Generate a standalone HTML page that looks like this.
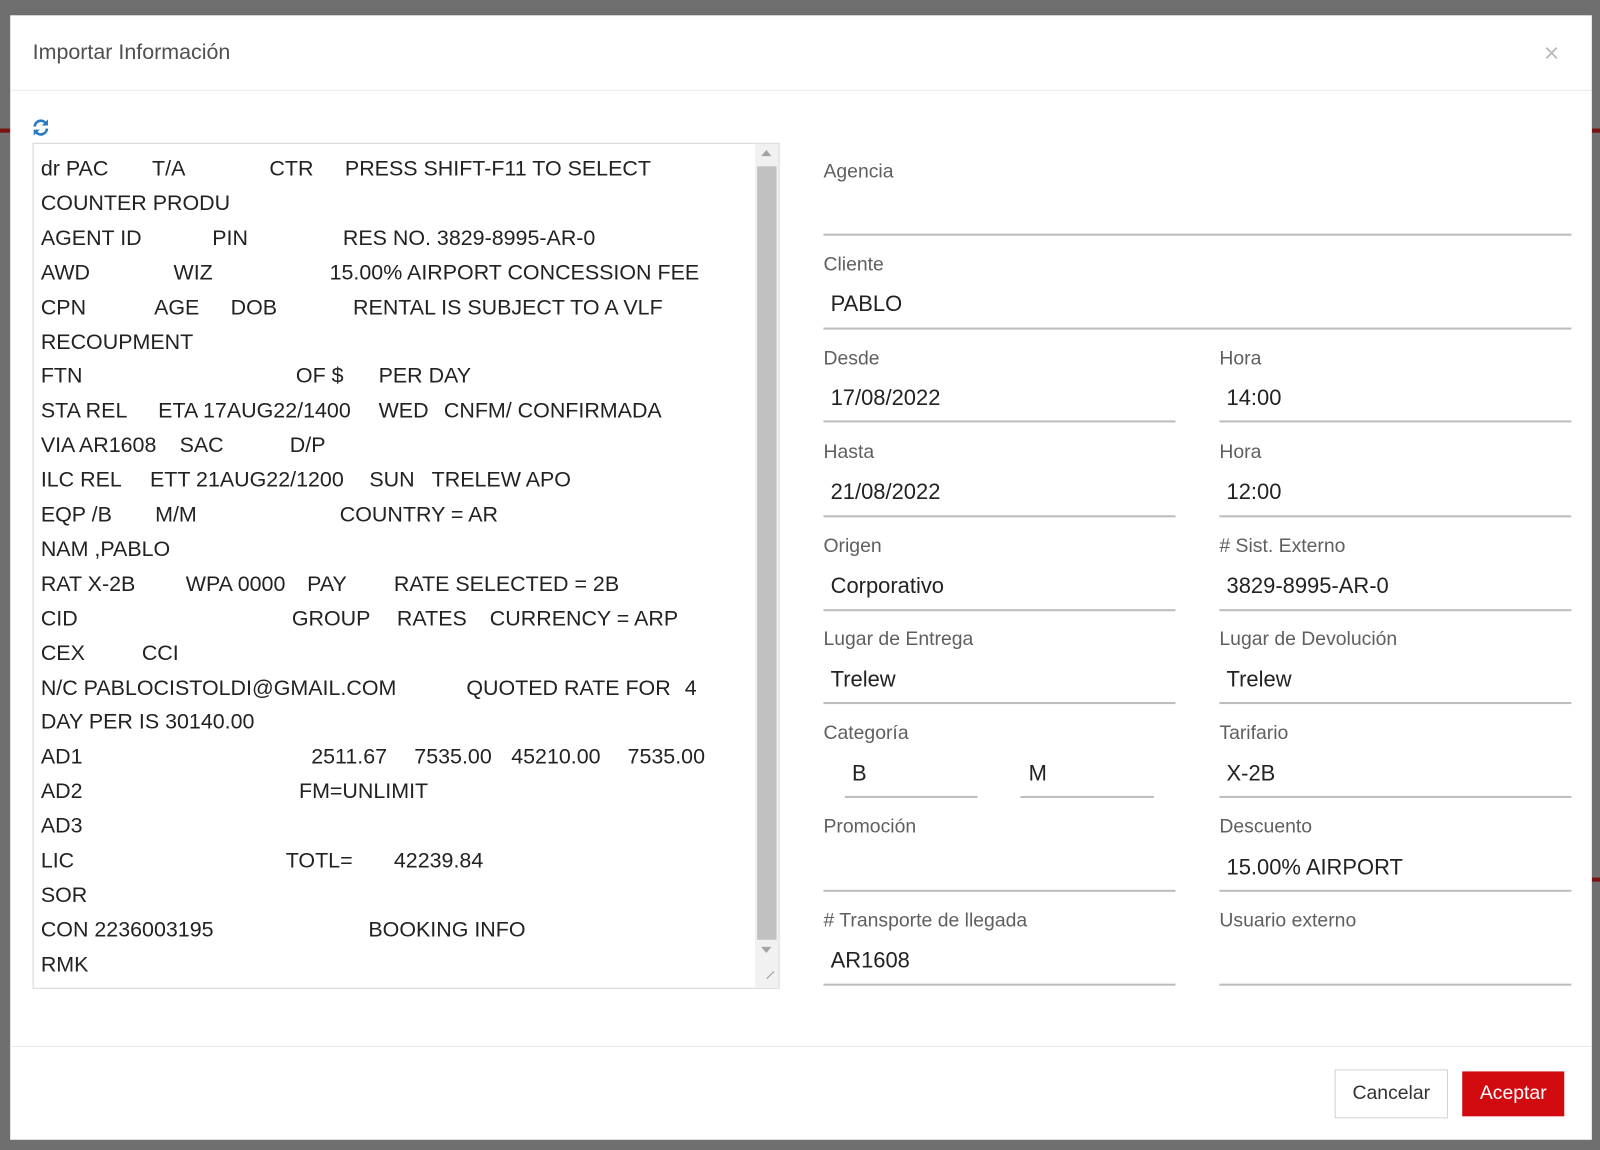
<!DOCTYPE html>
<html><head><meta charset="utf-8"><style>
html,body{margin:0;padding:0;width:1600px;height:1150px;overflow:hidden;background:#6f6f6f;font-family:"Liberation Sans",sans-serif}
#w{position:absolute;left:0;top:0;width:1568px;height:1127px;transform:scale(1.0204);transform-origin:0 0}
.a{position:absolute;white-space:nowrap}
#modal{position:absolute;left:10px;top:15px;width:1550px;height:1102px;background:#fff}
.ln{position:absolute;height:34px;line-height:34px;font-size:21px;color:#222}
.ln span{position:absolute;top:0;white-space:nowrap}
.lab{position:absolute;font-size:19px;color:#5f5f5f;white-space:nowrap;margin-top:1px}
.val{position:absolute;font-size:21.5px;color:#222;white-space:nowrap}
.ul{position:absolute;height:2px;background:#bdbdbd}
</style></head><body><div id="w">
<div class="a" style="left:0;top:126px;width:10px;height:4px;background:#7a1010"></div>
<div class="a" style="left:1560px;top:126px;width:8px;height:4px;background:#7a1010"></div>
<div class="a" style="left:1560px;top:860px;width:8px;height:4px;background:#7a1010"></div>
<div id="modal"></div>
<div class="a" style="left:32px;top:40px;font-size:21px;color:#505050">Importar Información</div>
<div class="a" style="left:1513px;top:37px;font-size:26px;color:#bbb">×</div>
<div class="a" style="left:10px;top:88px;width:1550px;height:1px;background:#e8e8e8"></div>
<svg class="a" style="left:31px;top:116px" width="18" height="18" viewBox="0 0 18 18"><path d="M3 8 A6 6 0 0 1 14 5" fill="none" stroke="#2a7ac0" stroke-width="2.6"/><path d="M16 1 L16 7 L10 7 Z" fill="#2a7ac0"/><path d="M15 10 A6 6 0 0 1 4 13" fill="none" stroke="#2a7ac0" stroke-width="2.6"/><path d="M2 17 L2 11 L8 11 Z" fill="#2a7ac0"/></svg>
<div class="a" style="left:32px;top:140px;width:730px;height:827px;border:1px solid #d6d6d6"></div>
<div class="a" style="left:740px;top:141px;width:23px;height:827px;background:#f1f1f1"></div>
<div class="a" style="left:742px;top:163px;width:19px;height:758px;background:#c1c1c1"></div>
<div class="a" style="left:746px;top:147px;width:0;height:0;border-left:5px solid transparent;border-right:5px solid transparent;border-bottom:6px solid #a3a3a3"></div>
<div class="a" style="left:746px;top:928px;width:0;height:0;border-left:5px solid transparent;border-right:5px solid transparent;border-top:6px solid #a3a3a3"></div>
<div class="a" style="left:750px;top:955px;width:10px;height:1px;background:#999;transform:rotate(-45deg)"></div>

<div id="ta"></div>
<script>
var L=[[["dr PAC",40],["T/A",149],["CTR",264],["PRESS SHIFT-F11 TO SELECT",338]],[["COUNTER PRODU",40]],[["AGENT ID",40],["PIN",208],["RES NO. 3829-8995-AR-0",336]],[["AWD",40],["WIZ",170],["15.00% AIRPORT CONCESSION FEE",323]],[["CPN",40],["AGE",151],["DOB",226],["RENTAL IS SUBJECT TO A VLF",346]],[["RECOUPMENT",40]],[["FTN",40],["OF $",290],["PER DAY",371]],[["STA REL",40],["ETA 17AUG22/1400",155],["WED",371],["CNFM/ CONFIRMADA",435]],[["VIA AR1608",40],["SAC",176],["D/P",284]],[["ILC REL",40],["ETT 21AUG22/1200",147],["SUN",362],["TRELEW APO",423]],[["EQP /B",40],["M/M",152],["COUNTRY = AR",333]],[["NAM ,PABLO",40]],[["RAT X-2B",40],["WPA 0000",182],["PAY",301],["RATE SELECTED = 2B",386]],[["CID",40],["GROUP",286],["RATES",389],["CURRENCY = ARP",480]],[["CEX",40],["CCI",139]],[["N/C PABLOCISTOLDI@GMAIL.COM",40],["QUOTED RATE FOR",457],["4",671]],[["DAY PER IS  30140.00",40]],[["AD1",40],["2511.67",305],["7535.00",406],["45210.00",501],["7535.00",615]],[["AD2",40],["FM=UNLIMIT",293]],[["AD3",40]],[["LIC",40],["TOTL=",280],["42239.84",386]],[["SOR",40]],[["CON 2236003195",40],["BOOKING INFO",361]],[["RMK",40]]];
var h="";for(var i=0;i<L.length;i++){var y=149+i*33.9;h+='<div class="ln" style="left:0;top:'+y+'px">';for(var j=0;j<L[i].length;j++)h+='<span style="left:'+L[i][j][1]+'px">'+L[i][j][0]+'</span>';h+='</div>';}
document.getElementById('ta').innerHTML=h;
</script>

<div class="lab" style="left:807px;top:157px">Agencia</div>
<div class="ul" style="left:807px;top:229px;width:733px"></div>
<div class="lab" style="left:807px;top:248px">Cliente</div>
<div class="val" style="left:814px;top:286px">PABLO</div>
<div class="ul" style="left:807px;top:321px;width:733px"></div>

<div class="lab" style="left:807px;top:340px">Desde</div><div class="val" style="left:814px;top:378px">17/08/2022</div><div class="ul" style="left:807px;top:412px;width:345px"></div>
<div class="lab" style="left:1195px;top:340px">Hora</div><div class="val" style="left:1202px;top:378px">14:00</div><div class="ul" style="left:1195px;top:412px;width:345px"></div>

<div class="lab" style="left:807px;top:432px">Hasta</div><div class="val" style="left:814px;top:470px">21/08/2022</div><div class="ul" style="left:807px;top:505px;width:345px"></div>
<div class="lab" style="left:1195px;top:432px">Hora</div><div class="val" style="left:1202px;top:470px">12:00</div><div class="ul" style="left:1195px;top:505px;width:345px"></div>

<div class="lab" style="left:807px;top:524px">Origen</div><div class="val" style="left:814px;top:562px">Corporativo</div><div class="ul" style="left:807px;top:597px;width:345px"></div>
<div class="lab" style="left:1195px;top:524px"># Sist. Externo</div><div class="val" style="left:1202px;top:562px">3829-8995-AR-0</div><div class="ul" style="left:1195px;top:597px;width:345px"></div>

<div class="lab" style="left:807px;top:615px">Lugar de Entrega</div><div class="val" style="left:814px;top:654px">Trelew</div><div class="ul" style="left:807px;top:688px;width:345px"></div>
<div class="lab" style="left:1195px;top:615px">Lugar de Devolución</div><div class="val" style="left:1202px;top:654px">Trelew</div><div class="ul" style="left:1195px;top:688px;width:345px"></div>

<div class="lab" style="left:807px;top:707px">Categoría</div>
<div class="val" style="left:835px;top:746px">B</div><div class="ul" style="left:828px;top:780px;width:130px"></div>
<div class="val" style="left:1008px;top:746px">M</div><div class="ul" style="left:1000px;top:780px;width:131px"></div>
<div class="lab" style="left:1195px;top:707px">Tarifario</div><div class="val" style="left:1202px;top:746px">X-2B</div><div class="ul" style="left:1195px;top:780px;width:345px"></div>

<div class="lab" style="left:807px;top:799px">Promoción</div><div class="ul" style="left:807px;top:872px;width:345px"></div>
<div class="lab" style="left:1195px;top:799px">Descuento</div><div class="val" style="left:1202px;top:838px">15.00% AIRPORT</div><div class="ul" style="left:1195px;top:872px;width:345px"></div>

<div class="lab" style="left:807px;top:891px"># Transporte de llegada</div><div class="val" style="left:814px;top:929px">AR1608</div><div class="ul" style="left:807px;top:964px;width:345px"></div>
<div class="lab" style="left:1195px;top:891px">Usuario externo</div><div class="ul" style="left:1195px;top:964px;width:345px"></div>

<div class="a" style="left:10px;top:1025px;width:1550px;height:1px;background:#e8e8e8"></div>
<div class="a" style="left:1308px;top:1048px;width:109px;height:46px;border:1px solid #d4d4d4;text-align:center;line-height:46px;font-size:19px;color:#333">Cancelar</div>
<div class="a" style="left:1433px;top:1050px;width:100px;height:44px;background:#d10a10;text-align:center;line-height:44px;font-size:19px;color:#fff">Aceptar</div>
</div></body></html>
